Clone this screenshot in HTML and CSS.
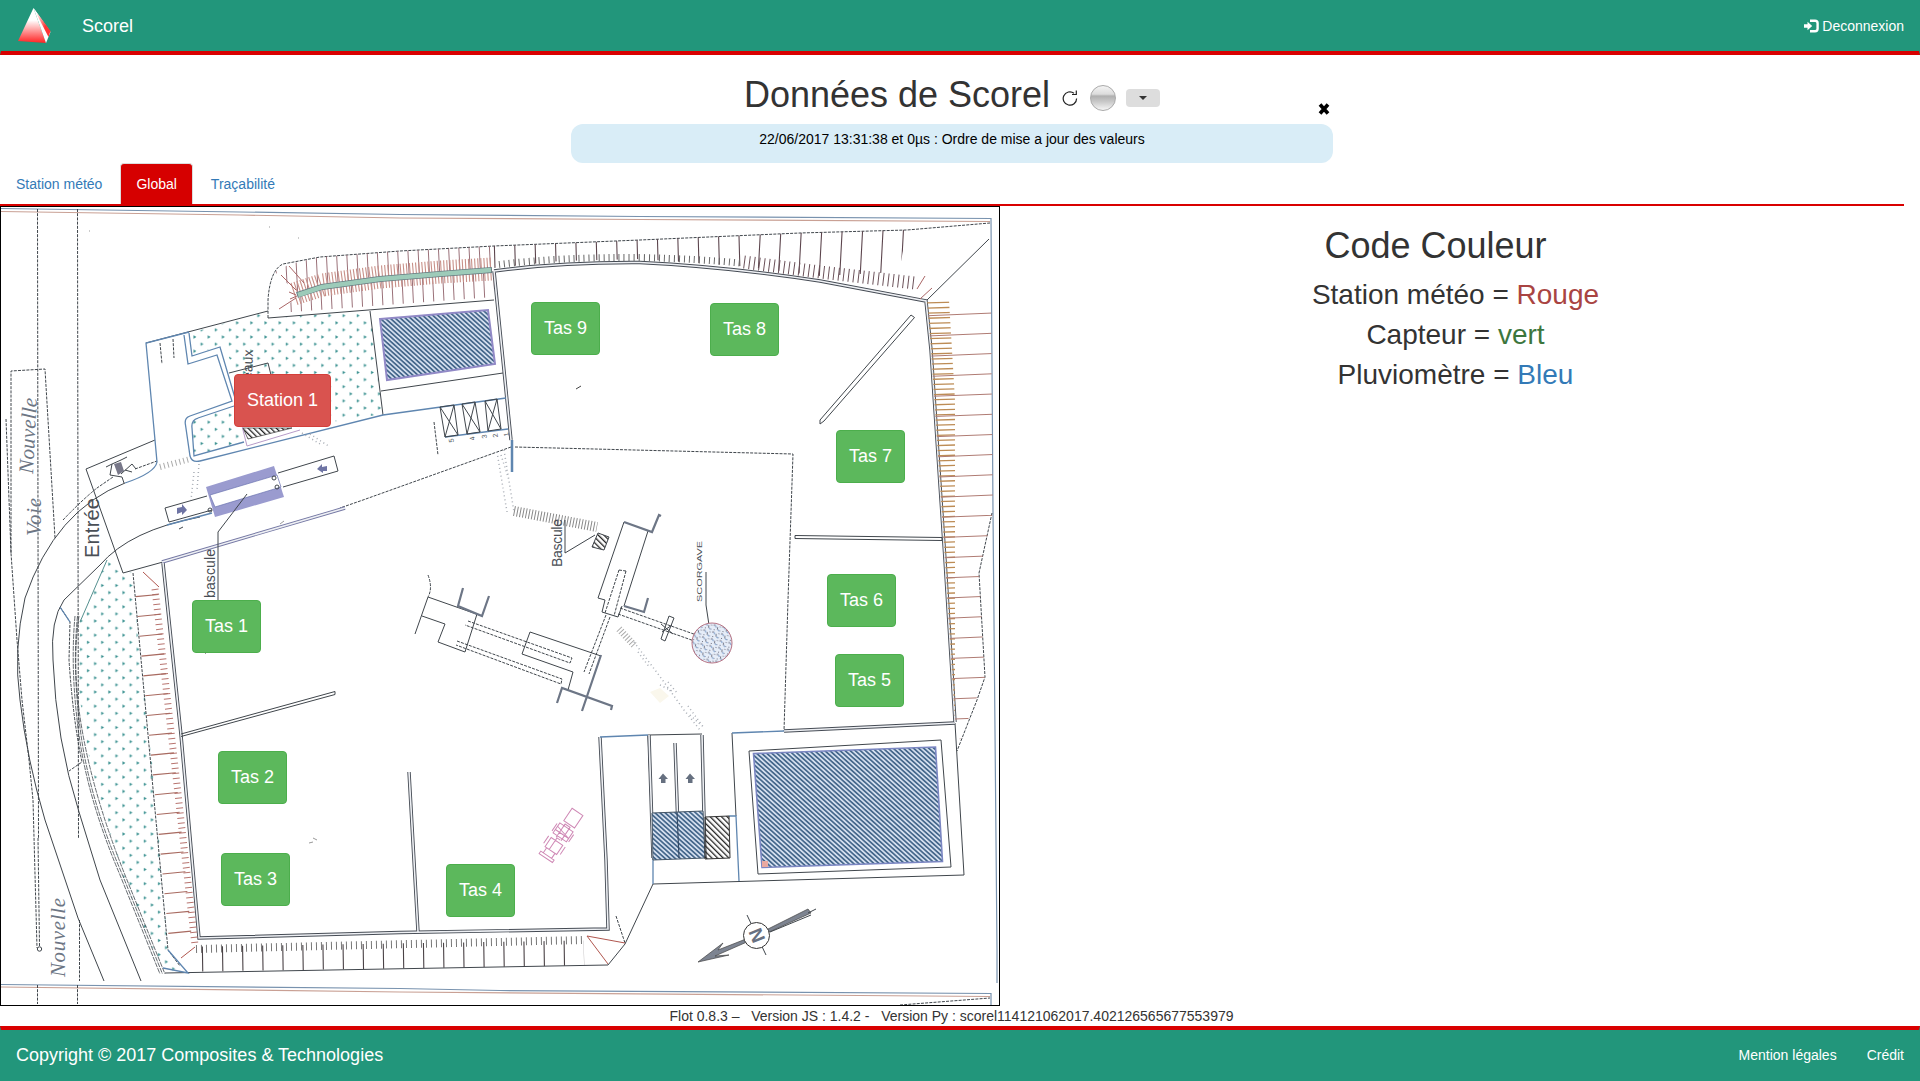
FILE: index.html
```html
<!DOCTYPE html>
<html lang="fr">
<head>
<meta charset="utf-8">
<title>Scorel</title>
<link rel="stylesheet" href="styles.css">
</head>
<body>
<header class="navbar">
  <svg class="logo" width="36" height="38" viewBox="0 0 36 38">
    <defs>
      <linearGradient id="face" x1="0" y1="0" x2="0" y2="1"><stop offset=".35" stop-color="#fff"/><stop offset="1" stop-color="#f22"/></linearGradient>
      <linearGradient id="side" x1="0" y1="0" x2="1" y2=".6"><stop offset=".2" stop-color="#fff"/><stop offset=".8" stop-color="#f33"/></linearGradient>
    </defs>
    <path d="M17.500 1L2 34L30 36Z" fill="url(#face)"/>
    <path d="M17.500 1L34.500 25L30 36Z" fill="#fff"/>
    <path d="M17.500 1L34.500 24L32.500 30Z" fill="url(#side)"/>
  </svg>
  <a class="brand">Scorel</a>
  <a class="logout"><svg width="16" height="14" viewBox="0 0 16 14"><path d="M1 5.200h3.500V2.700l4.700 4.300-4.700 4.300V8.800H1z" fill="#fff"/><path d="M7 1.800H12Q14.600 1.800 14.600 4.200V9.800Q14.600 12.200 12 12.200H7" fill="none" stroke="#fff" stroke-width="2.400"/></svg>Deconnexion</a>
</header>

<main class="page">
  <div class="title-row">
    <h1>Données de Scorel</h1>
    <svg class="refresh" width="16" height="16" viewBox="0 0 16 16"><path d="M12 3.200A6.700 6.700 0 1 0 14.600 8.500M14.300 .5V4.500H10" fill="none" stroke="#222" stroke-width="1.200"/></svg>
    <span class="ball"></span>
    <button class="toggle"><span class="caret"></span></button>
  </div>
  <div class="notice">22/06/2017 13:31:38 et 0µs : Ordre de mise a jour des valeurs
    <svg class="close" width="12" height="12" viewBox="0 0 12 12"><path d="M2 1.500L10 10.500M10 1.500L2 10.500" stroke="#000" stroke-width="3.600"/></svg>
  </div>
  <nav class="tabs"><a>Station météo</a><a class="active">Global</a><a>Traçabilité</a></nav>

  <div class="columns">
    <div class="map">
      <svg class="plan" width="998" height="798" viewBox="1 207 998 798">
        <defs>
          <pattern id="dots" width="14.200" height="14.200" patternUnits="userSpaceOnUse"><path d="M2 2l2.400 1.200-2.400 1.600zM9.100 9.100l2.400 1.200-2.400 1.600z" fill="#2f8a88" stroke="#4a9a9a" stroke-width=".4"/></pattern>
          <pattern id="hatch" width="3.400" height="3.400" patternUnits="userSpaceOnUse" patternTransform="rotate(-48)"><rect width="3.400" height="3.400" fill="#d3deee"/><rect width="1.700" height="3.400" fill="#46688c"/></pattern>
          <pattern id="hatchBlack" width="4" height="4" patternUnits="userSpaceOnUse" patternTransform="rotate(-45)"><rect width="1.300" height="4" fill="#222"/></pattern>
          <pattern id="speckle" width="9" height="7" patternUnits="userSpaceOnUse" patternTransform="rotate(12)"><rect width="9" height="7" fill="#e6edf8"/><path d="M1 0v2M4 2l1 3M7 1v1M1 5l1 1M7 5v1" stroke="#556" stroke-width=".8"/><path d="M2 1l1 2M5 5l2 1" stroke="#7ba0d0" /></pattern>
          <clipPath id="bankTop"><path d="M275 272L290 264L320 257L400 251L494 246L640 240L800 233L907 230L899 272L820 276L740 266L640 259L560 261L494 268L440 271L380 276L322 284L297 293Z"/></clipPath>
          <clipPath id="bankUnder"><path d="M297 297L322 289L380 281L440 276L494 273V297L278 313Z"/></clipPath>
          <clipPath id="bankRight"><path d="M927 302L991 304L993 512L979 573L985 677L960 740L955 722L945 560L931 350Z"/></clipPath>
          <clipPath id="bankRightShort"><path d="M927 300H949L955 400V722L945 560L931 350Z"/></clipPath>
        </defs>

        <!-- site frame -->
        <g fill="none" stroke-width="1.200">
          <path class="frame-line" d="M0 208.500L240 212L400 214.500L640 216.500L991 218.500L993 512L997 950V983M0 984.500L400 988.500L500 990.500L991 993.500V1005"/>
          <path class="rust" d="M0 211.500L240 215L400 218L640 219.500L990 221.500M0 987L400 992L990 996.500"/>
        </g>

        <!-- planted areas -->
        <path fill="url(#dots)" d="M107 560L123 574L134 572L138 640L150 740L160 850L168 950L186 973H163L125 882L100 800L85 740L79 690L80 620Z"/>
        <path fill="url(#dots)" d="M190 333L268 311L270 318L370 311L383 414L331 422V374H238L222 345L192 356ZM192 421L234 406L244 442L194 456Z"/>

        <!-- surveyed boundaries -->
        <g class="ink dashed">
          <path d="M37.500 209L38.500 838M38 838L39.500 946M37.500 985V1004M77.500 209L78.500 838M79.500 920V981M77.500 985V1004"/>
          <path d="M11 553V371L45 369L55 538M6 419L11 553L17 640L22 700L29 760L33 800L37 948"/>
          <path d="M268 318V300Q270 270 283 264L320 257L400 251L494 246L640 240L800 233L907 230L990 223M900 1005L990 998"/>
          <path d="M515 447L793 454L788 600L784 731M511 447L363 500L340 508M992 513L979 573L985 677L977 700L957 751"/>
          <path d="M133 573L168 950L180 966M63 520Q82 500 97 488L113 477M135 469L157 461M434 422L438 455M616 916L625 943"/>
          <path d="M60 607L70 622L69 660Q73 720 82 762L69 771M160 343L162 364M173 339L174 358"/>
        </g>
        <g class="ink">
          <path d="M125 483Q55 510 25 598Q13 650 20 700Q27 760 45 820L78 918L104 981"/>
          <path d="M200 517Q130 530 100 565L64 600Q50 620 53 660Q56 740 79 812L100 880L141 981"/>
          <path d="M86 469L155 440M86 469L123 573L163 562M146 343L268 311M268 318L494 300"/>
          <path d="M370 311L383 415M381 391L503 373M926 301L989 239"/>
          <path d="M732 733L736 816M955 723L964 875L653 884L625 944L608 965L165 973M648 735L702 734M648 735L653 860"/>
        </g>
        <g class="ink strip">
          <path d="M79 616Q71 670 83 735T125 875L165 974M75 616Q70 670 79 735T120 875L160 974"/>
          <path d="M77.500 616Q72 670 81 735T122.500 875L162.500 974"/>
        </g>

        <!-- double walls -->
        <g class="wall">
          <path d="M163 563L181 735L199 938L400 932.500L608 929L606 860L600 737"/>
          <path d="M494 271Q560 262 640 262.500Q730 267 820 281L926 301L931 350L945 560L955 722M494 271L511 440"/>
          <path d="M702 735L705 858M675 743L679 858M649 735L653 858M784 731L955 723M409 772L418 932"/>
          <path class="violet" d="M162 562L345 508"/>
        </g>
        <g class="wall-gap">
          <path d="M163 563L181 735L199 938L400 932.500L608 929L606 860L600 737"/>
          <path d="M494 271Q560 262 640 262.500Q730 267 820 281L926 301L931 350L945 560L955 722M494 271L511 440"/>
          <path d="M702 735L705 858M675 743L679 858M649 735L653 858M784 731L955 723M409 772L418 932"/>
          <path d="M162 562L345 508"/>
        </g>
        <g class="ink">
          <path d="M181 734L335 691.500V694.500L181 736.500M820 420L911 315L914.500 317.500L824 421L820 424ZM795 535.500L942 537.500V540.500L795 538.500Z"/>
        </g>

        <!-- embankment hachures -->
        <g fill="none">
          <path clip-path="url(#bankTop)" d="M275 258L494 247" stroke="#9a7078" stroke-width="90" stroke-dasharray="1 9.200"/>
          <path clip-path="url(#bankTop)" d="M494 252L750 245L920 254" stroke="#5c454d" stroke-width="90" stroke-dasharray="1.100 19.300"/>
          <path clip-path="url(#bankUnder)" d="M290 295L494 285" stroke="#9a7078" stroke-width="70" stroke-dasharray="1 9.200"/>
          <path d="M499 264.500Q560 257 640 257.500Q700 259 740 263" stroke="#666" stroke-width="7" stroke-dasharray="1 4"/>
          <path d="M744 262L820 272L915 283" stroke="#6a5058" stroke-width="13" stroke-dasharray="1 4"/>
          <path d="M294 294L322 285L380 277L440 272L492 269" stroke="#c89088" stroke-width="23" stroke-dasharray="1.100 2"/>
          <path d="M297 295L322 287L380 279L440 274L492 270" stroke="#667a80" stroke-width="6"/>
          <path d="M298 295L322 287L380 279L440 274L491 270" stroke="#9dcbb9" stroke-width="4.600"/>
          <path d="M289 266L304 283M281 275L296 290M279 309L296 298M289 292L296 295M290 299L297 296M917 289L925 276M920 299L932 288" stroke="#a66" />
          <path clip-path="url(#bankRightShort)" d="M938 302L950 722" stroke="#bd8c55" stroke-width="60" stroke-dasharray="1.300 3.800"/>
          <path clip-path="url(#bankRight)" d="M958 314L976 760" stroke="#b07c74" stroke-width="110" stroke-dasharray="1 19.200"/>
          <path d="M155 589L195 945" stroke="#b87570" stroke-width="7" stroke-dasharray="1 4"/>
          <path d="M147 595L180 935" stroke="#a86a60" stroke-width="23" stroke-dasharray="1.100 18.800"/>
          <path d="M196 949L583 940" stroke="#777" stroke-width="8" stroke-dasharray="1 4"/>
          <path d="M202 959L584 953" stroke="#4a4246" stroke-width="25" stroke-dasharray="1.100 19"/>
          <path d="M143 572L159 587M181 958L195 947M587 936L625 943M587 936L608 964" stroke="#b0564e"/>
        </g>

        <!-- kerbs -->
        <g class="blue" fill="none" stroke-width="1.300">
          <path d="M125 483Q155 473 157 462L155 440L146 343L189 332M184 335L188 364L217 355L232 401L190 416Q184 418 185.500 425L190 456Q192 463 200 461L383 415L506 398M189 333L192 356L220 347L235 398"/>
          <path d="M234 406L198 418Q191 420 192 428L194 456L244 442M167 525L212 513M445 437L508 429M600 737L648 735M732 733L784 731M729 816H736L739 881M653 860V884M168 950L188 973L163 968M60 607L70 622"/>
          <path d="M107 560L80 622" stroke="#55908f" stroke-width="1"/>
          <path d="M512 440V472" stroke-width="2.500"/>
        </g>
        <path d="M235 398L247 446L300 430" fill="none" stroke="#b79bc8"/>
        <path d="M243 428H292L248 439Z" fill="url(#hatchBlack)" stroke="#333" stroke-width=".7"/>
        <path class="ink" d="M229 373L268 363L271 375"/>

        <!-- basins -->
        <path d="M380 319L488 310L495 364L387 380Z" fill="url(#hatch)" stroke="#9189c6" stroke-width="2"/>
        <path d="M753.500 753.500L935.500 747L942.500 861.500L762 867.500Z" fill="url(#hatch)" stroke="#7b86c2" stroke-width="1.600"/>
        <path class="ink" d="M749 751L941 740L951 867L758 874Z"/>
        <path d="M762 861h6v6h-6z" fill="#e9a9a0"/>
        <path d="M652 813L703 811L705 858L653 860Z" fill="url(#hatch)" stroke="#456"/>
        <path d="M677 812L679 858" stroke="#334a66" stroke-width="1.200"/>
        <path d="M705 817L729 816L730 858L705 859Z" fill="url(#hatchBlack)" stroke="#333"/>
        <path d="M663 773.500L668 779H665.500V783H661V779H658.500ZM690 773.500L695 779H692.500V783H688V779H685.500Z" fill="#667080"/>

        <!-- parking bays -->
        <path class="ink" d="M440 407L454 405L458 435L445 437ZL458 435M454 405L445 437M462 404L475 402L480 432L467 434ZL480 432M475 402L467 434M485 401L497 399L501 429L488 431ZL501 429M497 399L488 431"/>

        <!-- entrance weighbridge -->
        <path d="M206 487L274 466L284 497L215 517Z" fill="#9a9bcf"/>
        <path d="M210 495L277 475L281 487L215 507Z" fill="#fff" stroke="#6a72b0" stroke-width=".7"/>
        <path class="ink" d="M207 496L165 508L169 522L212 510M278 473L334 456L338 471L283 487M247 494L218 532V600M179 529L183 527"/>
        <path d="M177 508L182 507V504L187 510L182 515V512L177 514ZM327 466L322 467V464L317 469L323 473V471L327 471Z" fill="#6e74a4"/>
        <circle cx="274" cy="478" r="2" class="ink"/><circle cx="277" cy="487" r="2" class="ink"/><circle cx="210" cy="510" r="2" class="ink"/>
        <path d="M114 464L121 462L124 471L118 475Z" fill="#778"/>
        <path class="ink" d="M106 467L112 464L110 475L122 477L124 483M112 464L121 460L127 457M121 474L132 464L136 469M125 470L132 472"/>
        <circle cx="39.500" cy="949" r="2.200" class="ink"/>

        <!-- speckled tracks -->
        <g fill="none" stroke="#aaa" stroke-dasharray="1 2">
          <path d="M160 467L190 459" stroke-width="6" stroke-dasharray="1 3"/>
          <path class="speck" d="M194 472L191 500M199 464L197 490M302 433L320 444M310 434L330 447"/>
          <path class="speck" d="M497 452L507 512M501 455L509 480M504 450L514 512"/>
          <path d="M514 511L597 527" stroke-width="10" stroke="#888"/>
          <path d="M619 629L634 645" stroke-width="7"/>
          <path class="speck" d="M634 642L664 682L684 710L700 730M638 652L650 668M660 685L674 692M668 682L678 694M690 715L702 726M688 706L704 728"/>
        </g>
        <path d="M650 692l10-4 9 8-9 7z" fill="#faf7ec"/>

        <!-- crushing plant -->
        <g class="ink">
          <path d="M624 522L598 598L605 600L602 612L618 617L622 606M648 531L624 606M428 597L415 634M422 616L445 624L438 642L465 652L477 614M428 597L482 616M530 632L601 656M530 632L522 654L573 672L568 690"/>
          <path d="M669 616L674 618L665 641L661 639ZM661 624L673 634M672 625L662 632M565 520V553L595 535M706 572V605L709 625"/>
          <path d="M598 533L609 537L604 550L592 547Z" style="fill:url(#hatchBlack)"/>
        </g>
        <g class="ink dashed">
          <path d="M619 570L605 613M626 571L614 616M619 570L626 571M606 615L584 672M610 617L589 674M620 608L705 638M618 614L700 643M428 575Q433 588 428 597"/>
          <path d="M468 621L572 658L570 663L465 625M457 641L562 679L561 684L456 645"/>
        </g>
        <g class="beam">
          <path d="M624 522L652 532L659 515L661 516M624 606L644 612L648 598M463 588L458 606L482 616L489 596M601 655L582 711M557 703L562 688L612 706L611 710"/>
        </g>
        <circle cx="712" cy="643" r="20" fill="url(#speckle)" stroke="#b77384"/>

        <!-- wheel loader -->
        <g transform="translate(562 834) rotate(-56)" fill="none" stroke="#cf88b5" stroke-width="1">
          <path d="M12-6H27V7H12ZM-4-8H8V8H-4ZM-6-3H10V3H-6M-3-10H6M-3 10H6M0-8V8M4-8L0 8M-20-7H-9V7H-20ZM-18-10H-9M-18 10H-9M-20-2H-6V2M-29-8H-26V8H-29ZM-26-5H-20M-26 5H-20"/>
        </g>

        <!-- north arrow -->
        <path d="M698 962L723 943L718 950L756 935L808 909L811 913L756 938L715 956L729 955Z" fill="#7d8491" stroke="#444" stroke-width=".7"/>
        <path class="ink" d="M747 915L766 955M808 913L816 909M770 932L811 915"/>
        <circle cx="756.500" cy="935.500" r="13" fill="#fff" stroke="#333"/>
        <text class="north" transform="translate(756.500 935.500) rotate(68)" text-anchor="middle" y="6">N</text>

        <!-- labels -->
        <g class="road">
          <text transform="translate(41 536) rotate(-90)" textLength="38">Voie</text>
          <text transform="translate(33 474) rotate(-87)" textLength="76">Nouvelle</text>
          <text transform="translate(65 977) rotate(-90)" textLength="79">Nouvelle</text>
        </g>
        <g class="label">
          <text transform="translate(99 558) rotate(-90)" font-size="20" textLength="60">Entrée</text>
          <text transform="translate(215 598) rotate(-90)" font-size="14" textLength="49">bascule</text>
          <text transform="translate(562 567) rotate(-90)" font-size="14" textLength="48">Bascule</text>
          <text transform="translate(252 380) rotate(-88)" font-size="14">eaux</text>
          <text transform="translate(702 602) rotate(-90)" font-size="7" textLength="61" lengthAdjust="spacingAndGlyphs">SCORGAVE</text>
          <text transform="translate(454 442) rotate(-100)" font-size="7">5</text>
          <text transform="translate(475 440) rotate(-100)" font-size="7">4</text>
          <text transform="translate(487 438) rotate(-100)" font-size="7">3</text>
          <text transform="translate(498 437) rotate(-100)" font-size="7">2</text>
          <text transform="translate(509 436) rotate(-100)" font-size="7">1</text>
        </g>
        <path d="M576 389L581 386" stroke="#444"/>
        <path d="M205 653.500H206M284 521L280 524M313 838L317 840M309 843L313 842M89 231H90M269 227H270M298 238H299" stroke="#999"/>
      </svg>
      <button class="pin red station-1">Station 1</button>
      <button class="pin tas-1">Tas 1</button>
      <button class="pin tas-2">Tas 2</button>
      <button class="pin tas-3">Tas 3</button>
      <button class="pin tas-4">Tas 4</button>
      <button class="pin tas-5">Tas 5</button>
      <button class="pin tas-6">Tas 6</button>
      <button class="pin tas-7">Tas 7</button>
      <button class="pin tas-8">Tas 8</button>
      <button class="pin tas-9">Tas 9</button>
    </div>
    <section class="legend">
      <h2>Code Couleur</h2>
      <p>Station météo = <span class="c-red">Rouge</span></p>
      <p>Capteur = <span class="c-green">vert</span></p>
      <p>Pluviomètre = <span class="c-blue">Bleu</span></p>
    </section>
  </div>
  <p class="versions">Flot 0.8.3 – &nbsp; Version JS : 1.4.2 - &nbsp; Version Py : scorel114121062017.402126565677553979</p>
</main>

<footer class="footer">
  <span class="copyright">Copyright © 2017 Composites &amp; Technologies</span>
  <nav class="links"><a>Mention légales</a><a>Crédit</a></nav>
</footer>
</body>
</html>
```
FILE: styles.css
```css
* { box-sizing: border-box; }
body {
  margin: 0;
  height: 1081px;
  display: flex;
  flex-direction: column;
  overflow: hidden;
  background: #fff;
  color: #333;
  font: 14px/20px "Liberation Sans", Arial, sans-serif;
}
h1, h2, p { margin: 0; font-weight: 400; }
button { font-family: inherit; }

.navbar {
  height: 55px;
  flex: none;
  display: flex;
  align-items: center;
  padding: 0 15px;
  background: #22967b;
  border: 1px solid #22967b;
  border-top: 0;
  border-bottom: 4px solid #d90000;
  color: #fff;
}
.logo { flex: none; margin-top: 1px; }
.brand { margin-left: 30px; font-size: 18px; }
.logout { margin-left: auto; display: flex; align-items: center; gap: 3px; }

.page { flex: 1; min-height: 0; }
.title-row {
  width: 1904px;
  height: 69px;
  display: flex;
  justify-content: center;
  align-items: center;
  padding: 11px 0 0;
}
h1 { font-size: 36px; line-height: 40px; padding-bottom: 1px; }
.refresh { margin: 5px 0 0 12px; }
.ball {
  width: 26px;
  height: 26px;
  margin: 6px 0 0 12px;
  border: 1px solid #aaa;
  border-radius: 50%;
  background: linear-gradient(#f4f4f4 0, #dcdcdc 34%, #b0b0b0 42%, #c8c8c8 65%, #f6f6f6 100%);
}
.toggle {
  width: 34px;
  height: 18px;
  margin: 6px 0 0 10px;
  padding: 0;
  border: 0;
  border-radius: 4px;
  background: #ddd;
  display: flex;
  justify-content: center;
  align-items: center;
}
.caret { border: 4px solid transparent; border-top-color: #333; border-bottom: 0; }

.notice {
  position: relative;
  width: 762px;
  height: 39px;
  margin-left: 571px;
  padding-top: 5px;
  border-radius: 12px;
  background: #d9edf7;
  color: #000;
  text-align: center;
}
.close { position: absolute; right: 3px; top: -21px; }

.tabs {
  width: 1904px;
  height: 43px;
  display: flex;
  gap: 2px;
  border-bottom: 2px solid #d90000;
}
.tabs a {
  padding: 10px 15px;
  border: 1px solid transparent;
  border-bottom: 0;
  color: #337ab7;
  border-radius: 4px 4px 0 0;
}
.tabs .active { background: #d60000; border-color: #ddd; color: #fff; }

.columns { display: flex; }
.map {
  position: relative;
  flex: none;
  width: 1000px;
  height: 800px;
  border: 1px solid #000;
}
.plan { display: block; }
.ink { fill: none; stroke: #40464c; stroke-width: 1; }
.dashed { stroke-dasharray: 3 1.2; }
.strip { stroke-width: .8; stroke-dasharray: 5 1; }
.blue { stroke: #5f86b0; }
.frame-line { stroke: #7892ae; }
.rust { stroke: #c9a094; }
.speck { stroke: #a8adb5; stroke-width: 1.5; stroke-dasharray: 1 3; }
.wall { fill: none; stroke: #454b54; stroke-width: 3.4; }
.wall .violet { stroke: #7578a4; }
.wall-gap { fill: none; stroke: #eef0f4; stroke-width: 1.6; }
.beam { fill: none; stroke: #6d7686; stroke-width: 2.2; }
.road { font: italic 21px "Liberation Serif", serif; fill: #6d7684; }
.label { fill: #4a4f56; }
.north { font: bold 19px "Liberation Sans", sans-serif; fill: #687080; }

.pin {
  position: absolute;
  width: 69px;
  height: 53px;
  padding: 0;
  border: 1px solid #4cae4c;
  border-radius: 4px;
  background: #5cb85c;
  color: #fff;
  font-size: 18px;
}
.pin.red { width: 97px; background: #d9534f; border-color: #d43f3a; }
.station-1 { left: 233px; top: 167px; }
.tas-1 { left: 191px; top: 393px; }
.tas-2 { left: 217px; top: 544px; }
.tas-3 { left: 220px; top: 646px; }
.tas-4 { left: 445px; top: 657px; }
.tas-5 { left: 834px; top: 447px; }
.tas-6 { left: 826px; top: 367px; }
.tas-7 { left: 835px; top: 223px; }
.tas-8 { left: 709px; top: 96px; }
.tas-9 { left: 530px; top: 95px; }

.legend { width: 911px; padding-top: 20px; text-align: center; }
.legend h2 { padding-right: 40px; margin-bottom: 9px; font-size: 36px; line-height: 40px; }
.legend p { font-size: 28px; line-height: 40px; }
.c-red { color: #a94442; }
.c-green { color: #3c763d; }
.c-blue { color: #337ab7; }

.versions { width: 1903px; text-align: center; }

.footer {
  height: 55px;
  flex: none;
  display: flex;
  align-items: center;
  justify-content: space-between;
  padding: 0 15px 2px;
  background: #22967b;
  border: 1px solid #22967b;
  border-bottom: 0;
  border-top: 4px solid #d90000;
  color: #fff;
}
.copyright { font-size: 18px; }
.links { display: flex; gap: 30px; }
```
